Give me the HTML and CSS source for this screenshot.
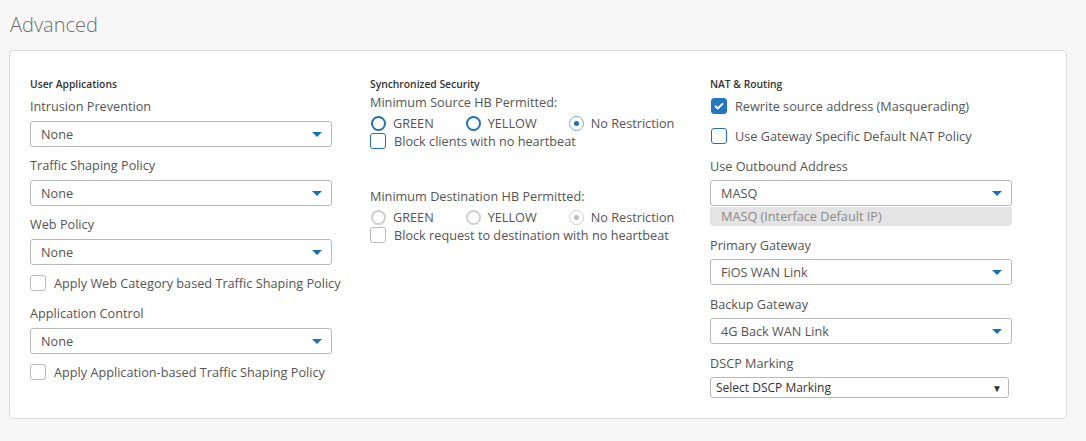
FILE: index.html
```html
<!DOCTYPE html>
<html>
<head>
<meta charset="utf-8">
<link rel="stylesheet" href="styles.css">
</head>
<body>
<h1 class="title">Advanced</h1>
<div class="card">
  <div class="col">
    <div class="heading">User Applications</div>
    <div class="label">Intrusion Prevention</div>
    <div class="select"><span>None</span><i class="caret"></i></div>
    <div class="label gap9">Traffic Shaping Policy</div>
    <div class="select"><span>None</span><i class="caret"></i></div>
    <div class="label gap9">Web Policy</div>
    <div class="select"><span>None</span><i class="caret"></i></div>
    <div class="check gap9"><span class="box grey"></span>Apply Web Category based Traffic Shaping Policy</div>
    <div class="label gap12">Application Control</div>
    <div class="select"><span>None</span><i class="caret"></i></div>
    <div class="check gap9"><span class="box grey"></span>Apply Application-based Traffic Shaping Policy</div>
  </div>
  <div class="col">
    <div class="heading">Synchronized Security</div>
    <div class="label gap2">Minimum Source HB Permitted:</div>
    <div class="radios">
      <span class="radio"><span class="ring"></span>GREEN</span>
      <span class="radio"><span class="ring"></span>YELLOW</span>
      <span class="radio"><span class="ring on"></span>No Restriction</span>
    </div>
    <div class="check tight"><span class="box blue"></span>Block clients with no heartbeat</div>
    <div class="label gap37">Minimum Destination HB Permitted:</div>
    <div class="radios">
      <span class="radio"><span class="ring off"></span>GREEN</span>
      <span class="radio"><span class="ring off"></span>YELLOW</span>
      <span class="radio"><span class="ring off on"></span>No Restriction</span>
    </div>
    <div class="check tight"><span class="box grey"></span>Block request to destination with no heartbeat</div>
  </div>
  <div class="col nat">
    <div class="heading">NAT &amp; Routing</div>
    <div class="check c3 first"><span class="box checked"><svg viewBox="0 0 16 16" width="16" height="16"><path d="M4 8.3l2.6 2.6L12 5.6" fill="none" stroke="#fff" stroke-width="2.2" stroke-linecap="round" stroke-linejoin="round"/></svg></span>Rewrite source address (Masquerading)</div>
    <div class="check c3 second"><span class="box blue"></span>Use Gateway Specific Default NAT Policy</div>
    <div class="label gap12">Use Outbound Address</div>
    <div class="select"><span>MASQ</span><i class="caret"></i></div>
    <div class="hint">MASQ (Interface Default IP)</div>
    <div class="label gap10">Primary Gateway</div>
    <div class="select"><span>FiOS WAN Link</span><i class="caret"></i></div>
    <div class="label gap10">Backup Gateway</div>
    <div class="select"><span>4G Back WAN Link</span><i class="caret"></i></div>
    <div class="label gap10">DSCP Marking</div>
    <div class="native"><span>Select DSCP Marking</span><i class="tri">&#9660;</i></div>
  </div>
</div>
</body>
</html>
```

FILE: styles.css
```css
html, body {
  margin: 0;
  padding: 0;
  background: #f7f7f7;
  font-family: "Open Sans", "Noto Sans", sans-serif;
  color: #555;
}
.title {
  margin: 0;
  padding: 11px 0 0 10px;
  height: 50px;
  box-sizing: border-box;
  font-size: 20px;
  font-weight: 300;
  color: #6f6f6f;
  line-height: 28px;
}
.card {
  margin: 0 19px 0 9px;
  height: 369px;
  box-sizing: border-box;
  background: #fff;
  border: 1px solid #dcdcdc;
  border-radius: 4px;
  padding: 26px 0 0 20px;
  display: grid;
  grid-template-columns: 340px 340px 340px;
  align-items: start;
}
.col {
  display: flex;
  flex-direction: column;
  width: 302px;
}
.heading {
  font-size: 10.3px;
  font-weight: 600;
  color: #333;
  line-height: 14px;
  height: 14px;
  white-space: nowrap;
}
.label {
  font-size: 12.7px;
  line-height: 18px;
  height: 18px;
  margin-top: 6px;
  margin-bottom: 6px;
  color: #555;
  white-space: nowrap;
}
.nat .label { margin-bottom: 5px; }
.gap2 { margin-top: 2px; margin-bottom: 3px; }
.gap9 { margin-top: 9px; }
.gap10 { margin-top: 10px; }
.gap12 { margin-top: 12px; }
.gap37 { margin-top: 37px; margin-bottom: 3px; }
.select {
  height: 26px;
  box-sizing: border-box;
  border: 1px solid #b9b9b9;
  border-radius: 3px;
  display: flex;
  align-items: center;
  justify-content: space-between;
  padding: 0 9px 0 10px;
  font-size: 12.7px;
  color: #555;
  background: #fff;
}
.caret {
  width: 0;
  height: 0;
  border-left: 5px solid transparent;
  border-right: 5px solid transparent;
  border-top: 5px solid #1b6fb5;
}
.check {
  display: flex;
  align-items: center;
  height: 18px;
  font-size: 12.7px;
  color: #555;
  white-space: nowrap;
}
.box {
  width: 16px;
  height: 16px;
  box-sizing: border-box;
  border-radius: 3px;
  border: 1.5px solid #bbb;
  margin-right: 8px;
  flex: none;
  display: flex;
  align-items: center;
  justify-content: center;
}
.box.blue { border-color: #2370b5; }
.box.checked { background: #2576c0; border-color: #2576c0; }
.check.tight { margin-top: 0; }
.check.c3 { margin-left: 1px; }
.check.c3.first { margin-top: 6px; }
.check.c3.second { margin-top: 12px; }
.radios {
  display: flex;
  align-items: center;
  height: 18px;
  font-size: 12.7px;
  color: #555;
  white-space: nowrap;
}
.radio {
  display: flex;
  align-items: center;
  margin-right: 31px;
}
.ring {
  width: 15px;
  height: 15px;
  box-sizing: border-box;
  border-radius: 50%;
  border: 2.5px solid #2470b4;
  margin: 0 7px 0 1px;
  display: flex;
  align-items: center;
  justify-content: center;
}
.ring.on {
  border: 1.5px solid #7fa6c9;
}
.ring.on::after {
  content: "";
  width: 5px;
  height: 5px;
  border-radius: 50%;
  background: #1f6db1;
}
.ring.off {
  border: 2px solid #cfcfcf;
}
.ring.off.on {
  border: 1.5px solid #d0d0d0;
}
.ring.off.on::after {
  background: #bdbdbd;
}
.hint {
  height: 19px;
  box-sizing: border-box;
  margin: 1px 0 0 0;
  background: #e4e4e4;
  border-radius: 0 0 4px 4px;
  font-size: 12.7px;
  line-height: 18px;
  color: #8a8a8a;
  padding-left: 11px;
}
.native {
  width: 299px;
  height: 21px;
  box-sizing: border-box;
  border: 1px solid #b9b9b9;
  border-radius: 3px;
  display: flex;
  align-items: center;
  justify-content: space-between;
  padding: 0 6px 0 5px;
  font-size: 12px;
  color: #333;
}
.tri {
  font-style: normal;
  font-size: 10px;
  color: #333;
}
```
